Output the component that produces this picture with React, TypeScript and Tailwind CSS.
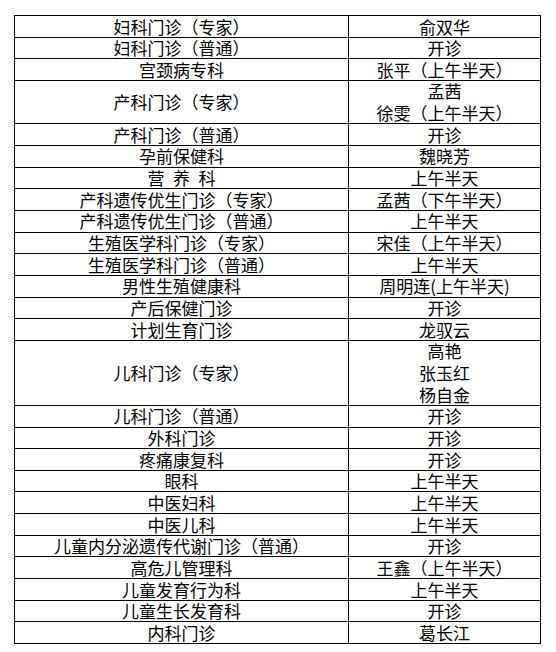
import React from "react";

type Row = { left: string; right: string[] };

const rows: Row[] = [
  { left: "妇科门诊（专家）", right: ["俞双华"] },
  { left: "妇科门诊（普通）", right: ["开诊"] },
  { left: "宫颈病专科", right: ["张平（上午半天）"] },
  { left: "产科门诊（专家）", right: ["孟茜", "徐雯（上午半天）"] },
  { left: "产科门诊（普通）", right: ["开诊"] },
  { left: "孕前保健科", right: ["魏晓芳"] },
  { left: "营\u2002养\u2002科", right: ["上午半天"] },
  { left: "产科遗传优生门诊（专家）", right: ["孟茜（下午半天）"] },
  { left: "产科遗传优生门诊（普通）", right: ["上午半天"] },
  { left: "生殖医学科门诊（专家）", right: ["宋佳（上午半天）"] },
  { left: "生殖医学科门诊（普通）", right: ["上午半天"] },
  { left: "男性生殖健康科", right: ["周明连(上午半天)"] },
  { left: "产后保健门诊", right: ["开诊"] },
  { left: "计划生育门诊", right: ["龙驭云"] },
  { left: "儿科门诊（专家）", right: ["高艳", "张玉红", "杨自金"] },
  { left: "儿科门诊（普通）", right: ["开诊"] },
  { left: "外科门诊", right: ["开诊"] },
  { left: "疼痛康复科", right: ["开诊"] },
  { left: "眼科", right: ["上午半天"] },
  { left: "中医妇科", right: ["上午半天"] },
  { left: "中医儿科", right: ["上午半天"] },
  { left: "儿童内分泌遗传代谢门诊（普通）", right: ["开诊"] },
  { left: "高危儿管理科", right: ["王鑫（上午半天）"] },
  { left: "儿童发育行为科", right: ["上午半天"] },
  { left: "儿童生长发育科", right: ["开诊"] },
  { left: "内科门诊", right: ["葛长江"] },
];

const UNIT = 21.667;

export default function App() {
  return (
    <div
      className="w-[556px] h-[652px] bg-white pt-[15px] pl-[14px] text-black"
      style={{ fontFamily: '"Noto Sans CJK SC", "Noto Sans", sans-serif' }}
    >
      <div className="w-[527px] border-l border-t border-black">
        {rows.map((r, i) => (
          <div
            key={i}
            className="flex border-b border-black"
            style={{ height: `${UNIT * r.right.length}px` }}
          >
            <div className="w-[334px] shrink-0 border-r border-black flex items-center justify-center text-[17px] leading-[21.667px] whitespace-pre">
              {r.left}
            </div>
            <div className="flex-1 border-r border-black flex flex-col items-center justify-center text-[17px] leading-[21.667px]">
              {r.right.map((t, j) => (
                <div key={j}>{t}</div>
              ))}
            </div>
          </div>
        ))}
      </div>
    </div>
  );
}
